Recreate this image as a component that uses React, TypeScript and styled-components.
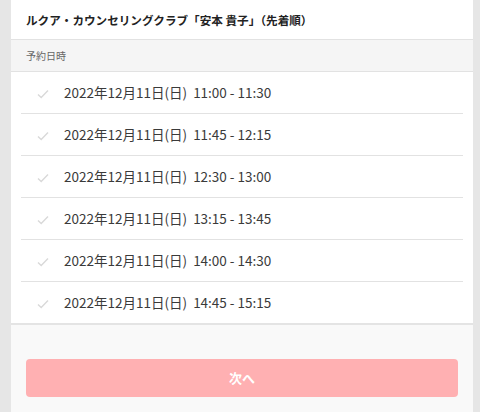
import React from 'react';
import styled, { createGlobalStyle } from 'styled-components';

const slots = [
  '11:00 - 11:30',
  '11:45 - 12:15',
  '12:30 - 13:00',
  '13:15 - 13:45',
  '14:00 - 14:30',
  '14:45 - 15:15',
];

function Check() {
  return (
    <svg width="12" height="10" viewBox="0 0 12 10">
      <path d="M1 5.5 L4.2 8.5 L11 1.5" fill="none" stroke="#d9d9d9" strokeWidth="1.4" />
    </svg>
  );
}

function App() {
  return (
    <>
      <GlobalStyle />
      <Page>
        <Panel>
          <Title>ルクア・カウンセリングクラブ「安本 貴子」（先着順）</Title>
          <SectionHead>予約日時</SectionHead>
          <List>
            {slots.map((s) => (
              <Row key={s}>
                <CheckBox>
                  <Check />
                </CheckBox>
                <SlotText>2022年12月11日(日)&nbsp;&nbsp;{s}</SlotText>
              </Row>
            ))}
          </List>
          <Footer>
            <NextButton disabled>次へ</NextButton>
          </Footer>
        </Panel>
      </Page>
    </>
  );
}

export default App;

const GlobalStyle = createGlobalStyle`
  body {
    margin: 0;
    background: #e6e6e6;
    font-family: "Noto Sans CJK JP", "Noto Sans", sans-serif;
  }
`

const Page = styled.div`
  width: 480px;
  height: 412px;
  padding: 0 7px 0 11px;
  box-sizing: border-box;
  overflow: hidden;
`

const Panel = styled.div`
  background: #fff;
  height: 100%;
  display: flex;
  flex-direction: column;
`

const Title = styled.div`
  height: 40px;
  display: flex;
  align-items: center;
  padding-left: 15px;
  font-size: 11.6px;
  font-weight: 700;
  color: #222;
  border-bottom: 1px solid #e2e2e2;
  box-sizing: border-box;
`

const SectionHead = styled.div`
  height: 32px;
  display: flex;
  align-items: center;
  padding-left: 15px;
  background: #f5f5f5;
  font-size: 10px;
  color: #666;
  border-bottom: 1px solid #e2e2e2;
  box-sizing: border-box;
`

const List = styled.div`
  padding: 0 10px;
  border-bottom: 2px solid #e4e4e4;
`

const Row = styled.div`
  height: 42px;
  display: flex;
  align-items: center;
  border-bottom: 1px solid #e2e2e2;
  box-sizing: border-box;

  &:last-child {
    border-bottom: none;
    height: 41px;
  }
`

const CheckBox = styled.div`
  width: 42px;
  display: flex;
  justify-content: center;
  padding-left: 1px;
  padding-top: 2px;
`

const SlotText = styled.div`
  font-size: 13.5px;
  color: #3a3a3a;
  margin-top: -2px;
`

const Footer = styled.div`
  flex: 1;
  background: #f9f9f9;
  padding: 34px 15px 0;
`

const NextButton = styled.button`
  width: 100%;
  height: 38px;
  border: none;
  border-radius: 4px;
  background: #ffb0b2;
  color: #fff;
  font-family: "Noto Sans CJK JP", "Noto Sans", sans-serif;
  font-size: 13px;
  font-weight: 700;
  padding-bottom: 3px;
`
